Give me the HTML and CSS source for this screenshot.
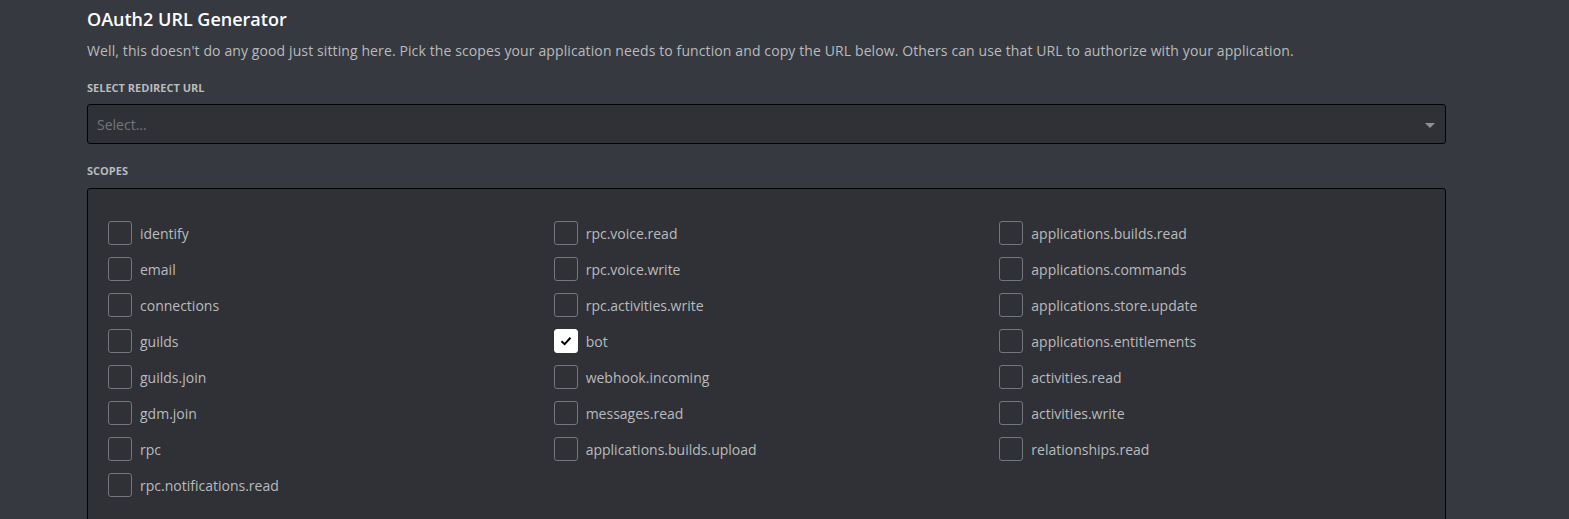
FILE: index.html
```html
<!DOCTYPE html>
<html>
<head>
<meta charset="utf-8">
<link rel="stylesheet" href="styles.css">
</head>
<body>
<div class="page">
  <h2 class="title">OAuth2 URL Generator</h2>
  <p class="desc">Well, this doesn't do any good just sitting here. Pick the scopes your application needs to function and copy the URL below. Others can use that URL to authorize with your application.</p>
  <div class="label">Select Redirect URL</div>
  <div class="select">
    <span class="placeholder">Select...</span>
    <span class="arrow"></span>
  </div>
  <div class="label scopes-label">Scopes</div>
  <div class="scopes">
    <div class="col">
      <label class="item"><span class="box"></span><span class="name">identify</span></label>
      <label class="item"><span class="box"></span><span class="name">email</span></label>
      <label class="item"><span class="box"></span><span class="name">connections</span></label>
      <label class="item"><span class="box"></span><span class="name">guilds</span></label>
      <label class="item"><span class="box"></span><span class="name">guilds.join</span></label>
      <label class="item"><span class="box"></span><span class="name">gdm.join</span></label>
      <label class="item"><span class="box"></span><span class="name">rpc</span></label>
      <label class="item"><span class="box"></span><span class="name">rpc.notifications.read</span></label>
    </div>
    <div class="col">
      <label class="item"><span class="box"></span><span class="name">rpc.voice.read</span></label>
      <label class="item"><span class="box"></span><span class="name">rpc.voice.write</span></label>
      <label class="item"><span class="box"></span><span class="name">rpc.activities.write</span></label>
      <label class="item"><span class="box checked"><svg width="14" height="14" viewBox="0 0 14 14"><path d="M2.5 7.3 L5.6 10.2 L11.5 3.8" fill="none" stroke="#000" stroke-width="2"/></svg></span><span class="name">bot</span></label>
      <label class="item"><span class="box"></span><span class="name">webhook.incoming</span></label>
      <label class="item"><span class="box"></span><span class="name">messages.read</span></label>
      <label class="item"><span class="box"></span><span class="name">applications.builds.upload</span></label>
    </div>
    <div class="col">
      <label class="item"><span class="box"></span><span class="name">applications.builds.read</span></label>
      <label class="item"><span class="box"></span><span class="name">applications.commands</span></label>
      <label class="item"><span class="box"></span><span class="name">applications.store.update</span></label>
      <label class="item"><span class="box"></span><span class="name">applications.entitlements</span></label>
      <label class="item"><span class="box"></span><span class="name">activities.read</span></label>
      <label class="item"><span class="box"></span><span class="name">activities.write</span></label>
      <label class="item"><span class="box"></span><span class="name">relationships.read</span></label>
    </div>
  </div>
</div>
</body>
</html>
```
FILE: styles.css
```css
html, body {
  margin: 0;
  padding: 0;
  background: #36393f;
  height: 100%;
  overflow: hidden;
}
body {
  font-family: "Open Sans", "Noto Sans", sans-serif;
}
.page {
  padding: 6px 0 0 87px;
  width: 1359px;
}
.title {
  margin: 0;
  font-size: 18px;
  font-weight: 600;
  line-height: 26px;
  color: #ffffff;
}
.desc {
  margin: 10px 0 0;
  font-size: 14px;
  line-height: 18px;
  letter-spacing: 0.11px;
  color: #b9bbbe;
}
.label {
  margin-top: 20px;
  font-size: 11px;
  font-weight: 700;
  line-height: 16px;
  text-transform: uppercase;
  color: #b9bbbe;
}
.select {
  margin-top: 8px;
  height: 38px;
  box-sizing: content-box;
  border: 1px solid #040405;
  border-radius: 3px;
  background: #303136;
  display: flex;
  align-items: center;
  justify-content: space-between;
  padding: 0 10px 0 9px;
}
.placeholder {
  font-size: 14px;
  color: #72767d;
}
.arrow {
  width: 0;
  height: 0;
  border-left: 5px solid transparent;
  border-right: 5px solid transparent;
  border-top: 5px solid #8e9297;
  margin-top: 2px;
}
.scopes-label {
  margin-top: 19px;
}
.scopes {
  margin-top: 9px;
  border: 1px solid #040405;
  border-radius: 3px;
  background: #2f3136;
  display: grid;
  grid-template-columns: repeat(3, 1fr);
  padding: 26px 0 40px 20px;
}
.col {
  display: flex;
  flex-direction: column;
}
.item {
  display: flex;
  align-items: center;
  height: 36px;
  gap: 8px;
}
.box {
  width: 22px;
  height: 22px;
  border: 1px solid #72767d;
  border-radius: 3px;
  flex: none;
  display: flex;
  align-items: center;
  justify-content: center;
}
.box.checked {
  background: #ffffff;
  border-color: #ffffff;
}
.name {
  font-size: 14px;
  color: #b9bbbe;
}
```
